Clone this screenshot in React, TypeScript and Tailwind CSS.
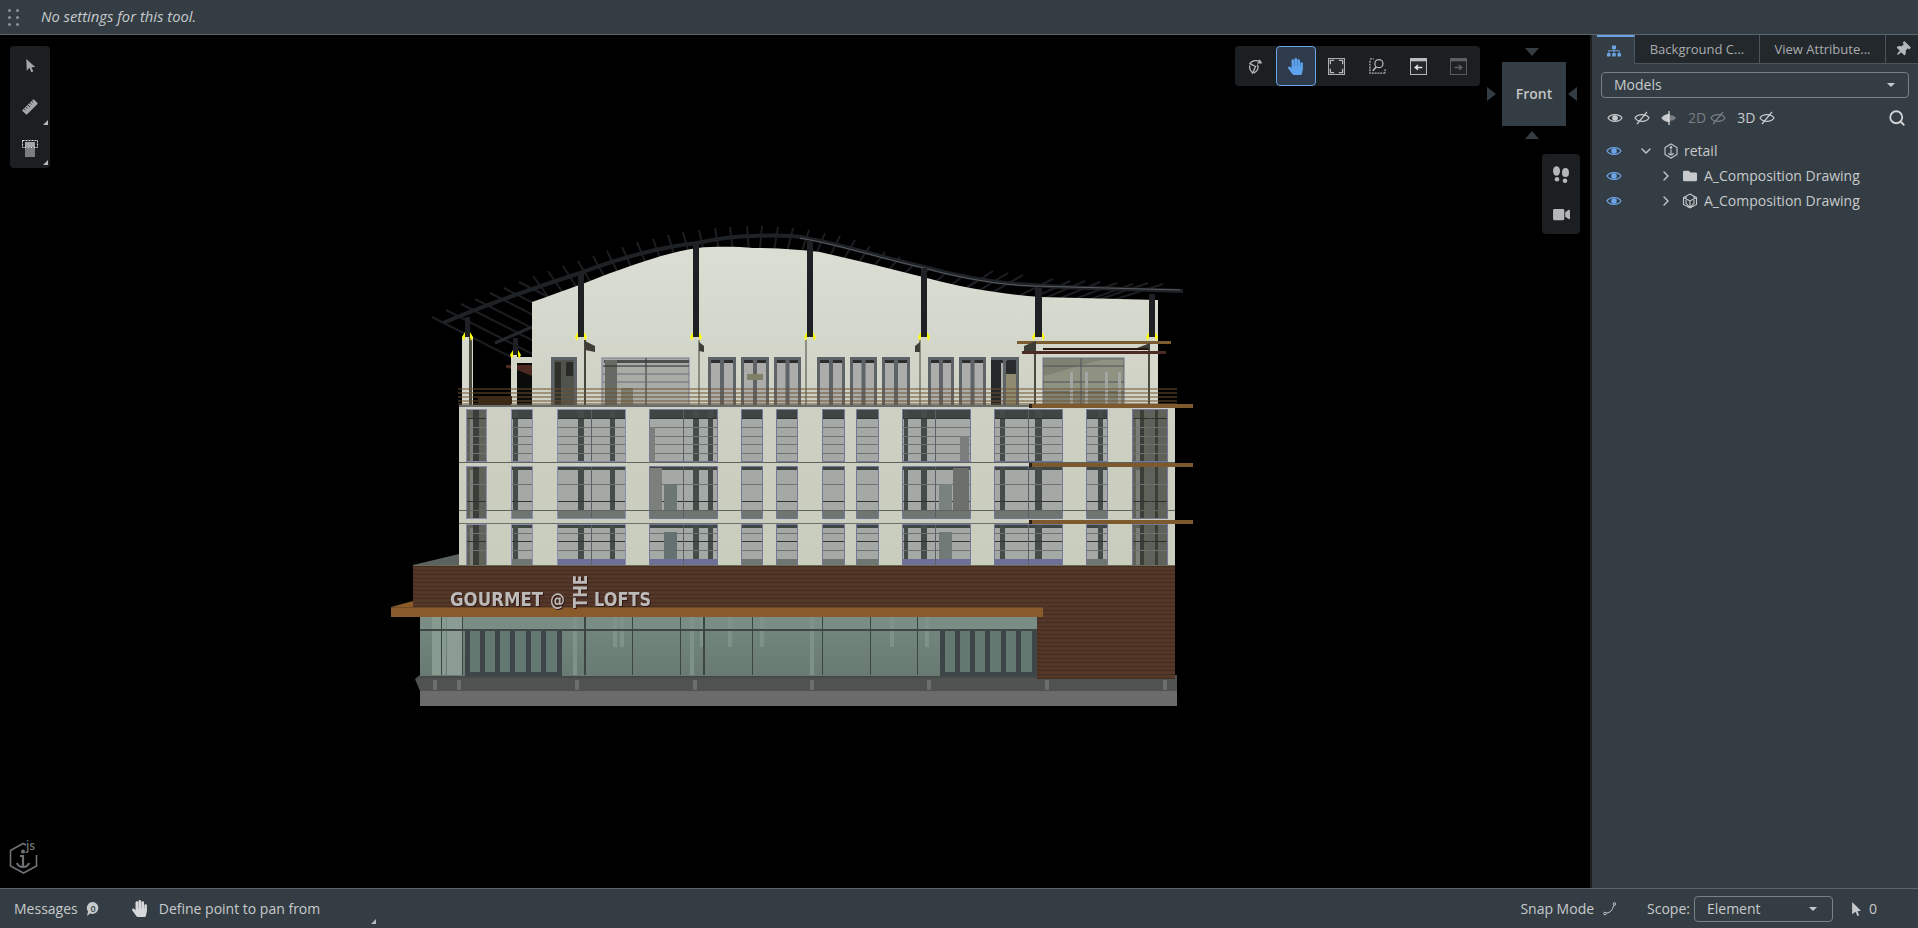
import { ChevronDown, ChevronRight, Search } from 'lucide-react';
import { FaFolder, FaHandPaper, FaSitemap, FaThumbtack, FaVideo } from 'react-icons/fa';

const lerp = (a: number, b: number, t: number) => a + (b - a) * t;

// rib start points, read off the roof in screen coords
const ribStarts: [number, number][] = [
  [432, 317], [446, 310], [461, 304], [475, 299], [490, 293], [504, 288], [519, 282], [533, 276],
  [548, 271], [563, 266], [578, 261], [593, 256], [607, 251], [622, 247], [637, 242], [653, 239],
  [668, 235], [683, 232], [699, 230], [715, 228], [730, 227], [747, 226], [762, 226], [778, 227],
  [793, 228], [809, 230], [825, 233], [840, 236], [855, 240], [870, 246], [885, 252], [900, 257],
  [915, 263], [930, 268], [947, 272], [963, 276], [977, 280], [993, 271], [1008, 273], [1023, 275],
  [1053, 279], [1070, 281], [1085, 281], [1100, 282], [1117, 283], [1133, 284], [1148, 283], [1163, 284],
];

function ribEnd(x: number, y: number): [number, number] {
  if (x < 532) return [x + 110, y + 56];
  if (x < 760) {
    const t = (x - 532) / 228;
    return [x + lerp(22, 1, t), y + 30];
  }
  const t = Math.min((x - 760) / 400, 1);
  return [x - lerp(2, 50, t), y + lerp(25, 16, t)];
}

type Win = { x: number; w: number; bars?: [number, number][]; center?: number; dark?: boolean };

const winCols: Win[] = [
  { x: 466, w: 21, dark: true, bars: [[473, 6]] },
  { x: 511, w: 22, bars: [[513, 5]] },
  { x: 557, w: 69, bars: [[578, 6], [610, 5]], center: 591 },
  { x: 649, w: 69, bars: [[693, 6], [708, 5]], center: 683 },
  { x: 741, w: 22 },
  { x: 776, w: 22 },
  { x: 822, w: 23 },
  { x: 856, w: 23 },
  { x: 902, w: 69, bars: [[904, 4], [921, 6]], center: 935 },
  { x: 994, w: 69, bars: [[1000, 5], [1035, 7]], center: 1028 },
  { x: 1086, w: 22, bars: [[1098, 5]] },
  { x: 1132, w: 36, dark: true, bars: [[1140, 4], [1155, 3]], center: 1150 },
];

const winRows = [
  { y: 409, h: 53, band: [409, 9], foot: null as null | [number, number], lines: [[418, '#2f3331'], [427, '#6e7272'], [436, '#6e7272'], [444, '#6e7272'], [453, '#6e7272']] as [number, string][], blue: false },
  { y: 466, h: 53, band: [467, 3], foot: [511, 8] as [number, number], lines: [[484, '#6e7272'], [501, '#2f3331']] as [number, string][], blue: false },
  { y: 524, h: 41, band: [525, 3], foot: [559, 6] as [number, number], lines: [[533, '#6e7272'], [541, '#2f3331'], [550, '#6e7272']] as [number, string][], blue: true },
];

const upperWins = [
  [551, 26], [708, 28], [741, 28], [774, 27], [817, 28], [850, 27], [882, 28], [928, 26], [959, 27], [991, 28],
];

const posts = [
  [465, 317, 5], [513, 338, 5], [578, 273, 6], [693, 243, 6], [807, 241, 6], [921, 268, 6], [1035, 288, 7], [1149, 294, 6],
];

function Building() {
  return (
    <svg viewBox="0 35 1590 853" className="block h-full w-full" fontFamily="'DejaVu Sans', sans-serif">
      <defs>
        <linearGradient id="wall" x1="0" y1="0" x2="0" y2="1">
          <stop offset="0" stopColor="#dbded3" />
          <stop offset="1" stopColor="#ced1c4" />
        </linearGradient>
        <linearGradient id="wallLow" x1="0" y1="0" x2="0" y2="1">
          <stop offset="0" stopColor="#cdd0c2" />
          <stop offset="1" stopColor="#c9cdbd" />
        </linearGradient>
        <pattern id="brick" width="8" height="4" patternUnits="userSpaceOnUse">
          <rect width="8" height="4" fill="#523729" />
          <rect y="2" width="8" height="1" fill="#462d24" />
          <rect x="2" y="0" width="3" height="1" fill="#59392c" />
        </pattern>
        <linearGradient id="glass" x1="0" y1="0" x2="0" y2="1">
          <stop offset="0" stopColor="#75897f" />
          <stop offset="1" stopColor="#687a72" />
        </linearGradient>
      </defs>

      {/* roof ribs */}
      {ribStarts.map(([x, y]) => {
        const [ex, ey] = ribEnd(x, y);
        return <line key={x} x1={x} y1={y} x2={ex} y2={ey} stroke="#1c1e21" strokeWidth="2" />;
      })}
      <path d="M495 343 L532 327" stroke="#25282b" strokeWidth="3" fill="none" />

      {/* upper wall */}
      <path
        d="M532 302 C560 292 580 285 600 277 C640 262 670 252 697 248 C720 246 740 247 753 248 C780 248 800 250 820 252 L867 263 L927 278 C960 287 1000 294 1040 297 L1158 300 L1158 405 L532 405 Z"
        fill="url(#wall)"
      />

      {/* roof beam */}
      <path
        d="M443 323 C490 303 540 286 580 273 C620 258 660 247 697 243 C720 238 740 236 753 236 C775 235 790 235 800 237 C840 244 880 257 924 267 C960 277 1000 284 1033 285 C1060 287 1080 288 1093 288 L1183 291"
        stroke="#1f2225"
        strokeWidth="4"
        fill="none"
      />
      <path d="M800 238 C840 245 880 258 924 268 C960 278 1000 285 1033 286 L1180 290" stroke="#5a5e62" strokeWidth="1" fill="none" />

      {/* wing behind second pillar */}
      <rect x="511" y="357" width="21" height="6" fill="#d3d6c9" />
      <rect x="517" y="363" width="15" height="42" fill="#0b0b0b" />
      <polygon points="506,365 532,365 532,376 515,369 506,368" fill="#4c2a22" />

      {/* pillars */}
      <rect x="462" y="337" width="11" height="68" fill="#d6d8cd" />
      <rect x="469" y="337" width="3" height="68" fill="#4b4a3f" />
      <rect x="511" y="355" width="6" height="50" fill="#d3d6c9" />
      <rect x="1036" y="337" width="7" height="68" fill="#d6d8cd" />
      <rect x="1034" y="350" width="2" height="55" fill="#4b4a3f" />
      <rect x="1150" y="337" width="8" height="68" fill="#d6d8cd" />
      <rect x="1148" y="350" width="2" height="55" fill="#4b4a3f" />

      {/* dark posts with yellow brackets */}
      {posts.map(([x, y, w]) => {
        const base = x === 513 ? 355 : 337;
        return (
          <g key={x}>
            <rect x={x} y={y} width={w} height={base - y} fill="#1e2023" />
            <path d={`M${x} ${base - 5} L${x - 3} ${base} L${x - 1} ${base + 4} L${x} ${base} Z`} fill="#ffff00" />
            <path d={`M${x + w} ${base - 5} L${x + w + 3} ${base} L${x + w + 1} ${base + 4} L${x + w} ${base} Z`} fill="#ffff00" />
          </g>
        );
      })}

      {/* thin rods and flags on the wall */}
      {[585, 699, 806, 920].map((x) => (
        <line key={x} x1={x} y1="340" x2={x} y2="405" stroke="#47473d" strokeWidth={x === 585 ? 2 : 1} />
      ))}
      <polygon points="585,341 595,346 595,352 585,350" fill="#3e3e36" />
      <polygon points="699,342 704,346 704,352 699,351" fill="#3e3e36" />
      <polygon points="920,342 915,346 915,352 920,352" fill="#3e3e36" />

      {/* top floor windows */}
      {upperWins.map(([x, w]) => (
        <g key={x}>
          <rect x={x} y="357" width={w} height="48" fill="#5d6367" />
          <rect x={x + 3} y="360" width={w - 6} height="45" fill="#acacaa" />
          <rect x={x + 3} y="360" width={w - 6} height="3" fill="#2b2d2e" />
          <rect x={x + w / 2 - 2} y="357" width="4" height="48" fill="#5d6367" />
        </g>
      ))}
      <rect x="554" y="360" width="20" height="45" fill="#50524c" />
      <rect x="555" y="362" width="6" height="43" fill="#2f302c" />
      <rect x="566" y="362" width="7" height="14" fill="#2a2b28" />
      <rect x="991" y="360" width="10" height="45" fill="#25272a" />
      <rect x="1006" y="361" width="10" height="13" fill="#2a2b2c" />
      <rect x="1006" y="374" width="10" height="31" fill="#8e8b70" />
      <rect x="747" y="374" width="16" height="6" fill="#807f68" />
      <rect x="602" y="358" width="87" height="47" fill="#a9aba7" stroke="#777c94" strokeWidth="1" />
      <rect x="604" y="360" width="85" height="3" fill="#4b4f4d" />
      <rect x="605" y="360" width="12" height="45" fill="#676a62" />
      <rect x="621" y="388" width="12" height="17" fill="#7c7e6f" />
      <line x1="646" y1="358" x2="646" y2="405" stroke="#2f3331" />
      {[366, 374, 382].map((y) => (
        <line key={y} x1="603" y1={y} x2="689" y2={y} stroke={y === 366 ? '#26292a' : '#666a72'} />
      ))}
      <rect x="1043" y="358" width="81" height="47" fill="#7f8272" stroke="#6e7388" />
      <polygon points="1044,392 1044,376 1100,360 1123,360 1123,392" fill="#8f9280" />
      <line x1="1081" y1="358" x2="1081" y2="405" stroke="#52565f" />
      {[366, 382, 392].map((y) => (
        <line key={y} x1="1043" y1={y} x2="1124" y2={y} stroke="#4e5258" />
      ))}
      {[1070, 1085, 1105, 1118].map((x) => (
        <rect key={x} x={x} y="372" width="3" height="33" fill="#a1a6a2" />
      ))}

      {/* pergola */}
      <rect x="1017" y="341" width="154" height="3" fill="#7a5c30" />
      <polygon points="1024,352 1024,346 1036,341 1036,352" fill="#3c3f37" />
      <polygon points="1132,350 1150,343 1150,350" fill="#3c3f37" />
      <rect x="1043" y="348" width="105" height="2" fill="#2a1512" />
      <rect x="1022" y="351" width="144" height="3" fill="#4d2b25" />

      {/* railing */}
      {[389, 393, 397, 401, 404].map((y) => (
        <line key={y} x1="458" y1={y} x2="1177" y2={y} stroke="#6e5230" strokeWidth="1.2" />
      ))}
      <rect x="478" y="396" width="34" height="8" fill="#3c2a17" />

      {/* main block */}
      <rect x="459" y="405" width="716" height="160" fill="url(#wallLow)" />
      <rect x="459" y="405" width="716" height="2" fill="#686c6c" />
      <line x1="459" y1="462.5" x2="1175" y2="462.5" stroke="#5f635d" />
      <line x1="459" y1="523.5" x2="1175" y2="523.5" stroke="#6c706a" />
      {winRows.map((row) =>
        winCols.map((c) => (
          <g key={`${row.y}-${c.x}`}>
            <rect x={c.x} y={row.y} width={c.w} height={row.h} fill={c.dark ? '#5f6258' : '#a5a9a6'} />
            {c.dark && <rect x={c.x + 4} y={row.y} width="8" height={row.h} fill="#7c8078" />}
            <rect x={c.x + 1} y={row.band[0]} width={c.w - 2} height={row.band[1]} fill={c.dark ? '#5f6258' : '#3f4542'} />
            {c.bars?.map(([bx, bw]) => (
              <rect key={bx} x={bx} y={row.band[0]} width={bw} height={row.y + row.h - row.band[0]} fill={c.dark ? '#3a3d38' : '#454b48'} />
            ))}
            {row.foot && !c.dark && (
              <rect
                x={c.x + 1}
                y={row.foot[0]}
                width={c.w - 2}
                height={row.foot[1]}
                fill={row.blue && c.w > 30 ? '#6c7096' : '#6f7570'}
              />
            )}
            {row.lines.map(([y, col]) => (
              <line key={y} x1={c.x} y1={y + 0.5} x2={c.x + c.w} y2={y + 0.5} stroke={col} />
            ))}
            {c.center && <line x1={c.center + 0.5} y1={row.y} x2={c.center + 0.5} y2={row.y + row.h} stroke="#5a5e66" />}
            <path
              d={
                row.blue
                  ? `M${c.x + 0.5} ${row.y + row.h} V${row.y + 0.5} H${c.x + c.w - 0.5} V${row.y + row.h}`
                  : `M${c.x + 0.5} ${row.y + 0.5} H${c.x + c.w - 0.5} V${row.y + row.h - 0.5} H${c.x + 0.5} Z`
              }
              stroke={c.x < 560 ? '#8a8eae' : '#73779a'}
              fill="none"
            />
          </g>
        )),
      )}
      <rect x="650" y="427" width="5" height="35" fill="#7c807d" />
      <rect x="650" y="468" width="12" height="43" fill="#7c807a" />
      <rect x="664" y="484" width="13" height="27" fill="#6c7672" />
      <rect x="664" y="532" width="13" height="27" fill="#657170" />
      <rect x="960" y="436" width="9" height="25" fill="#7a7f7d" />
      <rect x="953" y="468" width="16" height="43" fill="#6c706a" />
      <rect x="939" y="484" width="13" height="27" fill="#7a827f" />
      <rect x="939" y="532" width="13" height="27" fill="#727a78" />
      <line x1="459" y1="510.5" x2="1175" y2="510.5" stroke="#60645f" />

      {/* shelves on the right */}
      {[404, 463, 520].map((y) => (
        <g key={y}>
          <rect x="1032" y={y} width="161" height="4" fill="#7c5a2e" />
          <rect x="1029" y={y} width="3" height="4" fill="#2d1d12" />
        </g>
      ))}

      {/* base slab */}
      <polygon points="415,679 420,675 1177,675 1177,691 420,691" fill="#505251" />
      {[433, 457, 575, 693, 810, 927, 1045, 1163].map((x) => (
        <rect key={x} x={x} y="680" width="4" height="10" fill="#6c6f6e" />
      ))}
      <rect x="420" y="691" width="757" height="15" fill="#6b6b6b" />

      {/* podium */}
      <polygon points="413,565 459,554 459,565" fill="#5c625e" />
      <rect x="413" y="565" width="762" height="43" fill="url(#brick)" />
      <rect x="413" y="565" width="762" height="1" fill="#6f6a52" />
      <rect x="1037" y="607" width="138" height="72" fill="url(#brick)" />

      {/* glass storefront */}
      <rect x="420" y="617" width="617" height="60" fill="url(#glass)" />
      <rect x="420" y="617" width="617" height="12" fill="#798d85" />
      <rect x="432" y="617" width="14" height="58" fill="#879a90" />
      <rect x="447" y="617" width="15" height="58" fill="#8a9c94" />
      {[573, 613, 620, 690, 700, 728, 760, 810, 890, 925].map((x) => (
        <rect key={x} x={x} y="617" width="4" height={x % 3 === 0 ? 58 : 30} fill="#7f928a" />
      ))}
      <rect x="420" y="629" width="617" height="2" fill="#3f4746" />
      {[441, 462, 584, 632, 680, 703, 752, 822, 870, 917].map((x) => (
        <rect key={x} x={x} y="617" width={x === 584 || x === 703 ? 2 : 1} height="58" fill="#3c4444" />
      ))}
      {[465, 940].map((dx) => (
        <g key={dx}>
          <rect x={dx} y="631" width="97" height="45" fill="#647872" />
          {[0, 15, 30, 45, 61, 76, 92].map((o) => (
            <rect key={o} x={dx + o} y="631" width="5" height="45" fill="#3d4548" />
          ))}
          <rect x={dx} y="672" width="97" height="4" fill="#3d4548" />
        </g>
      ))}
      <rect x="420" y="676" width="617" height="2" fill="#454a48" />

      {/* canopy */}
      <polygon points="391,607 413,601 413,607" fill="#8a5a28" />
      <rect x="391" y="607" width="652" height="10" fill="#8a5b2a" />
      <rect x="391" y="607" width="652" height="1" fill="#6e4a26" />

      {/* sign */}
      <g fill="#bdbbba" fontWeight="700" className="drop-shadow-[1px_1px_0_#2f1612]">
        <text x="450" y="606" fontSize="20" textLength="93" lengthAdjust="spacingAndGlyphs">GOURMET</text>
        <text x="550" y="606" fontSize="18" textLength="15" lengthAdjust="spacingAndGlyphs">@</text>
        <text x="594" y="606" fontSize="20" textLength="57" lengthAdjust="spacingAndGlyphs">LOFTS</text>
        <text transform="translate(587 608) rotate(-90)" fontSize="20" textLength="33" lengthAdjust="spacingAndGlyphs">THE</text>
      </g>
    </svg>
  );
}

function Eye({ color = '#c7cacc', slash = false, className = '' }: { color?: string; slash?: boolean; className?: string }) {
  return (
    <svg viewBox="0 0 16 16" className={`h-4 w-4 ${className}`}>
      <path d="M1 8 C3.5 3.5 12.5 3.5 15 8 C12.5 12.5 3.5 12.5 1 8 Z" fill="none" stroke={color} strokeWidth="1.2" />
      {slash ? (
        <path d="M3 14 L13 2" stroke={color} strokeWidth="1.2" />
      ) : (
        <circle cx="8" cy="8" r="2.8" fill={color} />
      )}
    </svg>
  );
}

function CornerMark({ className }: { className: string }) {
  return <span className={`absolute h-0 w-0 border-b-[5px] border-l-[5px] border-b-[#b5b8ba] border-l-transparent ${className}`} />;
}

function ToolBtn({ children, active }: { children: React.ReactNode; active?: boolean }) {
  return (
    <div
      className={
        active
          ? 'relative flex h-10 w-10 items-center justify-center rounded border border-[#6ba5e7] bg-[#2d3b4a]'
          : 'relative flex h-10 w-10 items-center justify-center'
      }
    >
      {children}
    </div>
  );
}

function LeftTools() {
  return (
    <div className="absolute left-[10px] top-[11px] flex w-10 flex-col items-center rounded bg-[#1b1f22] py-[1px]">
      <ToolBtn>
        <svg viewBox="0 0 16 16" className="-mt-1 h-[15px] w-[15px]" fill="#a4a7a9">
          <path d="M3.5 1 L13 9.5 L9 9.8 L11 14.5 L8.8 15.2 L7 10.5 L4 13.5 Z" />
        </svg>
      </ToolBtn>
      <ToolBtn>
        <svg viewBox="0 0 20 20" className="h-[18px] w-[18px]">
          <g transform="rotate(-45 10 10)">
            <rect x="1" y="6.5" width="18" height="7" rx="1" fill="#a4a7a9" />
            <path d="M4 6.5 V9 M7 6.5 V9 M10 6.5 V10 M13 6.5 V9 M16 6.5 V9" stroke="#1b1f22" />
          </g>
        </svg>
        <CornerMark className="bottom-[2px] right-[2px]" />
      </ToolBtn>
      <ToolBtn>
        <svg viewBox="0 0 16 17" className="mt-[2px] h-[17px] w-4">
          <rect x="0.5" y="0.5" width="15" height="7" fill="none" stroke="#e0e0e0" strokeDasharray="2 1" />
          <rect x="3" y="2" width="10" height="5" fill="#a4a7a9" />
          <rect x="3" y="8" width="10" height="9" fill="#7a7d7f" />
        </svg>
        <CornerMark className="bottom-[2px] right-[2px]" />
      </ToolBtn>
    </div>
  );
}

function ViewTools() {
  return (
    <div className="absolute left-[1235px] top-[11px] flex h-10 w-[245px] items-center justify-between rounded bg-[#1b1f22] pr-[1px]">
      <ToolBtn>
        <svg viewBox="0 0 18 18" className="h-[17px] w-[17px]" fill="none" stroke="#b5b8ba" strokeWidth="1.4">
          <path d="M13 2 L15 5 L11 5.5 M15 5 C11 1 5 3 3 6 L9 9 L6 16 C3 13 2 11 3 8" />
          <path d="M11 7 C13 11 11 14 7 16" />
        </svg>
      </ToolBtn>
      <ToolBtn active>
        <FaHandPaper className="h-[17px] w-[17px] text-[#5da2ec]" />
      </ToolBtn>
      <ToolBtn>
        <svg viewBox="0 0 18 18" className="h-[17px] w-[17px]" fill="none" stroke="#b5b8ba">
          <rect x="0.5" y="0.5" width="17" height="17" fill="#26292c" strokeWidth="1" />
          <path d="M2.5 6.5 V2.5 H6.5 M11.5 2.5 H15.5 V6.5 M15.5 11.5 V15.5 H11.5 M6.5 15.5 H2.5 V11.5" strokeWidth="1.4" />
        </svg>
      </ToolBtn>
      <ToolBtn>
        <svg viewBox="0 0 18 18" className="h-[17px] w-[17px]" fill="none" stroke="#b5b8ba" strokeWidth="1.3">
          <path d="M1 3 V16 H17 M1 1 H5" strokeDasharray="2 1" />
          <circle cx="10.5" cy="6" r="4.3" />
          <path d="M7.5 9.5 L4 13.5" strokeWidth="1.8" />
          <path d="M17 12 V16" strokeDasharray="2 1" />
        </svg>
      </ToolBtn>
      <ToolBtn>
        <svg viewBox="0 0 18 18" className="h-[17px] w-[17px]">
          <rect x="0.5" y="0.5" width="17" height="17" fill="#26292c" stroke="#bcbfc1" />
          <rect x="0.5" y="0.5" width="17" height="3" fill="#bcbfc1" />
          <path d="M13 10 H6 M8.5 7.5 L5.5 10 L8.5 12.5" stroke="#e4e5e6" strokeWidth="1.5" fill="none" />
        </svg>
      </ToolBtn>
      <ToolBtn>
        <svg viewBox="0 0 18 18" className="h-[17px] w-[17px]">
          <rect x="0.5" y="0.5" width="17" height="17" fill="#1f2225" stroke="#5e6163" />
          <rect x="0.5" y="0.5" width="17" height="3" fill="#5e6163" />
          <path d="M5 10 H12 M9.5 7.5 L12.5 10 L9.5 12.5" stroke="#5e6163" strokeWidth="1.5" fill="none" />
        </svg>
      </ToolBtn>
    </div>
  );
}

function ViewCube() {
  return (
    <div className="absolute left-[1487px] top-[13px] flex w-[90px] flex-col items-center">
      <span className="h-0 w-0 border-x-[7px] border-t-[8px] border-x-transparent border-t-[#343d43]" />
      <div className="mb-[5px] mt-[6px] flex h-16 w-[90px] items-center">
        <span className="h-0 w-0 border-y-[7px] border-l-[9px] border-y-transparent border-l-[#343d43]" />
        <div className="ml-[6px] flex h-16 w-16 items-center justify-center bg-[#343d43] text-sm font-semibold text-[#c3c5c6]">Front</div>
        <span className="ml-[2px] h-0 w-0 border-y-[7px] border-r-[9px] border-y-transparent border-r-[#343d43]" />
      </div>
      <span className="h-0 w-0 border-x-[7px] border-b-[8px] border-x-transparent border-b-[#343d43]" />
    </div>
  );
}

function Footprints() {
  return (
    <svg viewBox="0 0 18 17" className="h-[17px] w-[18px]" fill="#b5b8ba">
      <ellipse cx="4.5" cy="5" rx="3.5" ry="4.8" />
      <ellipse cx="5" cy="13.3" rx="2.3" ry="2.2" />
      <ellipse cx="13.5" cy="6.5" rx="3.5" ry="4.6" />
      <ellipse cx="13" cy="14.7" rx="2.3" ry="2.2" />
    </svg>
  );
}

function Logo() {
  return (
    <div className="absolute bottom-[14px] left-[9px] h-[32px] w-[30px]">
      <svg viewBox="0 0 30 32" className="h-full w-full" fill="none" stroke="#6f7274">
        <path d="M17 3 L14 1.5 L1.5 8.5 V24 L14.5 31 L27.5 24 V13" strokeWidth="1.6" />
        <circle cx="14" cy="9.5" r="2" fill="#6f7274" stroke="none" />
        <path d="M14 13 V25 M8 21 C9 24 12 25 14 25 C16 25 19 24 20 21 M11 14 H14" strokeWidth="2.2" />
      </svg>
      <span className="absolute -top-[4px] left-[17px] text-xs font-semibold text-[#6f7274]">js</span>
    </div>
  );
}

function SidePanel() {
  return (
    <aside className="flex w-[328px] flex-col border-l-2 border-[#1b1f22] bg-[#343d43] text-sm text-[#c7cacc]">
      {/* Tabs */}
      <div className="flex h-[29px] items-stretch pl-[5px]">
        <div className="flex w-[38px] items-center justify-center border-t-2 border-r border-[#6ba5e7] border-r-[#4b555b] pr-[3px]">
          <FaSitemap className="h-[14px] w-[14px] text-[#6ba5e7]" />
        </div>
        <div className="flex w-[125px] items-center justify-center border-r border-b border-[#4b555b] bg-[#23282c] pt-[1px] text-[13px] text-[#a9acae]">Background C...</div>
        <div className="flex w-[126px] items-center justify-center border-r border-b border-[#4b555b] bg-[#23282c] pt-[1px] text-[13px] text-[#a9acae]">View Attribute...</div>
        <div className="flex flex-1 items-center justify-center border-b border-[#4b555b] bg-[#23282c]">
          <FaThumbtack className="h-[15px] w-[15px] rotate-45 text-[#b5b8ba]" />
        </div>
      </div>

      <div className="ml-[9px] mt-[8px] flex h-[26px] w-[308px] items-center justify-between rounded border border-[#7a8084] px-3">
        <span>Models</span>
        <span className="mr-[1px] h-0 w-0 border-x-4 border-t-4 border-x-transparent border-t-[#c7cacc]" />
      </div>

      {/* Visibility row */}
      <div className="mt-[8px] flex h-[24px] items-center pl-[15px] pr-[12px]">
        <Eye />
        <Eye slash className="ml-[11px]" />
        <svg viewBox="0 0 16 16" className="ml-[11px] h-4 w-4">
          <path d="M8 4.5 C5 4.5 2.5 6 1 8 C2.5 10 5 11.5 8 11.5 Z" fill="#c7cacc" stroke="#c7cacc" strokeWidth="1.2" />
          <path d="M8 5.5 C11 4.5 13.5 6 15 8 C13.5 10 11 11.5 8 10.5 Z" fill="#7a7f83" />
          <rect x="7.4" y="1" width="1.2" height="14" fill="#e2e3e4" />
        </svg>
        <span className="ml-[11px] text-[#7a7f83]">2D</span>
        <Eye slash color="#7a7f83" className="ml-[4px]" />
        <span className="ml-[11px]">3D</span>
        <Eye slash className="ml-[4px]" />
        <Search className="ml-auto h-[18px] w-[18px] text-[#d0d2d4]" strokeWidth={2.4} />
      </div>

      {/* Tree */}
      <div className="mt-[8px] flex flex-col">
        <div className="flex h-[25px] items-center pl-[14px]">
          <Eye color="#6ba5e7" />
          <ChevronDown className="ml-[16px] h-4 w-4" />
          <svg viewBox="0 0 16 16" className="ml-[9px] h-4 w-4" fill="none" stroke="#c7cacc" strokeWidth="1.1">
            <path d="M8 1 L14 4.5 V11.5 L8 15 L2 11.5 V4.5 Z" />
            <path d="M8 6.5 V12 M5.5 10 C6 11.5 7 12 8 12 C9 12 10 11.5 10.5 10" />
            <circle cx="8" cy="4.5" r="0.8" fill="#c7cacc" />
          </svg>
          <span className="ml-[5px]">retail</span>
        </div>
        <div className="flex h-[25px] items-center pl-[14px]">
          <Eye color="#6ba5e7" />
          <ChevronRight className="ml-[36px] h-4 w-4" />
          <FaFolder className="ml-[9px] h-[14px] w-[14px]" />
          <span className="ml-[7px]">A_Composition Drawing</span>
        </div>
        <div className="flex h-[25px] items-center pl-[14px]">
          <Eye color="#6ba5e7" />
          <ChevronRight className="ml-[36px] h-4 w-4" />
          <svg viewBox="0 0 16 16" className="ml-[8px] h-4 w-4" fill="none" stroke="#c7cacc" strokeWidth="1.1">
            <path d="M8 1 L14.5 4.5 V11.5 L8 15 L1.5 11.5 V4.5 Z M1.5 4.5 L8 8 L14.5 4.5 M8 8 V15 M4 3 L4 10 L8 15 M12 3 L12 10 L8 15" />
          </svg>
          <span className="ml-[6px]">A_Composition Drawing</span>
        </div>
      </div>
    </aside>
  );
}

function StatusBar() {
  return (
    <footer className="relative flex h-10 items-center border-t border-[#5a656c] bg-[#343d43] text-sm text-[#c7cacc]">
      <span className="ml-[14px]">Messages</span>
      <svg viewBox="0 0 14 16" className="ml-[8px] h-4 w-[14px]">
        <path d="M7 1 A6 6 0 1 1 4 12.5 L1 15 L2 10.5 A6 6 0 0 1 7 1 Z" fill="#c7cacc" />
        <text x="7" y="10.5" textAnchor="middle" fontSize="9" fontWeight="600" fill="#343d43">0</text>
      </svg>
      <FaHandPaper className="ml-[31px] h-[17px] w-[17px] text-[#d6d8d9]" />
      <span className="ml-[11px]">Define point to pan from</span>
      <CornerMark className="bottom-[4px] left-[371px]" />

      <span className="ml-auto">Snap Mode</span>
      <svg viewBox="0 0 14 14" className="ml-[9px] h-[14px] w-[14px]" fill="none" stroke="#c7cacc">
        <circle cx="2" cy="11.5" r="1.3" />
        <circle cx="11.5" cy="2" r="1.3" />
        <path d="M3.5 11 C7 11 9 8 9.5 6.5 L11 3.3" />
      </svg>
      <span className="ml-[30px]">Scope:</span>
      <div className="ml-[4px] flex h-[26px] w-[139px] items-center justify-between rounded border border-[#7a8084] pl-3 pr-[15px]">
        <span>Element</span>
        <span className="h-0 w-0 border-x-4 border-t-4 border-x-transparent border-t-[#c7cacc]" />
      </div>
      <svg viewBox="0 0 10 16" className="ml-[19px] h-[14px] w-[9px]" fill="#c7cacc">
        <path d="M0 0 L10 10 L6 10.5 L8 15 L6 16 L4 11 L0 14 Z" />
      </svg>
      <span className="ml-[8px] mr-[41px]">0</span>
    </footer>
  );
}

export default function App() {
  return (
    <div className="flex h-[928px] w-full flex-col overflow-hidden bg-black font-['Open_Sans',sans-serif]">
      {/* Tool settings */}
      <header className="flex h-[35px] items-center border-b border-[#5a656c] bg-[#343d43]">
        <div className="ml-2 grid grid-cols-2 gap-x-[5px] gap-y-[4px]">
          {[0, 1, 2, 3, 4, 5].map((i) => (
            <span key={i} className="h-[3px] w-[3px] rounded-full bg-[#8d9296]" />
          ))}
        </div>
        <span className="ml-[22px] pb-[1px] text-[14.8px] italic text-[#c7cacc]">No settings for this tool.</span>
      </header>

      <div className="flex flex-1 overflow-hidden">
        <main className="relative flex-1 bg-black">
          <Building />
          <LeftTools />
          <ViewTools />
          <ViewCube />
          <div className="absolute left-[1542px] top-[119px] flex h-[80px] w-[38px] flex-col items-center justify-around rounded bg-[#1b1f22]">
            <Footprints />
            <FaVideo className="h-[15px] w-[17px] text-[#b5b8ba]" />
          </div>
          <Logo />
        </main>
        <SidePanel />
      </div>

      <StatusBar />
    </div>
  );
}
